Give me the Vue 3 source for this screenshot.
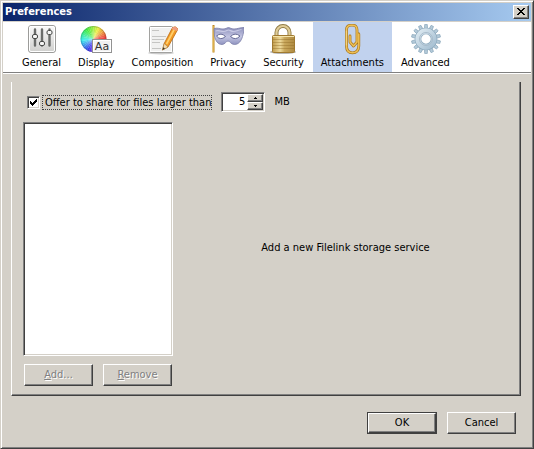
<script setup>
import { ref } from 'vue'

const tabs = ['General', 'Display', 'Composition', 'Privacy', 'Security', 'Attachments', 'Advanced']
const active = ref('Attachments')
const offerShare = ref(true)
const size = ref(5)

const wedges = Array.from({ length: 36 }, (_, i) => {
  const point = (deg) => {
    const a = ((deg - 90) * Math.PI) / 180
    return `${(13.5 + 13 * Math.cos(a)).toFixed(2)} ${(15 + 13 * Math.sin(a)).toFixed(2)}`
  }
  return {
    d: `M13.5 15L${point(i * 10)}A13 13 0 0 1 ${point(i * 10 + 11)}Z`,
    fill: `hsl(${(440 - i * 10) % 360} 82% 56%)`
  }
})
const teeth = Array.from({ length: 14 }, (_, i) => (i * 360) / 14)
</script>

<template>
  <main class="window">
    <header class="titlebar">
      <h1>Preferences</h1>
      <button class="close" type="button" aria-label="Close">
        <svg viewBox="0 0 8 7" shape-rendering="crispEdges">
          <path d="M0 0h2v1h1v1h2v-1h1v-1h2v1h-1v1h-1v1h-1v1h1v1h1v1h1v1h-2v-1h-1v-1h-2v1h-1v1h-2v-1h1v-1h1v-1h1v-1h-1v-1h-1v-1h-1z" />
        </svg>
      </button>
    </header>

    <nav class="toolbar">
      <button
        v-for="tab in tabs"
        :key="tab"
        type="button"
        class="tab"
        :class="{ selected: active === tab }"
        @click="active = tab"
      >
        <svg v-if="tab === 'General'" class="icon" viewBox="0 0 32 32">
          <defs>
            <linearGradient id="plate" x1="0" y1="0" x2="0" y2="1">
              <stop offset="0" stop-color="#fafafa" /><stop offset="1" stop-color="#cfcfcd" />
            </linearGradient>
          </defs>
          <rect x="2.5" y="1.5" width="27" height="27" rx="2.5" fill="url(#plate)" stroke="#9c9c9a" />
          <rect x="3.5" y="2.5" width="25" height="25" rx="1.5" fill="none" stroke="#fff" />
          <path d="M9 5.5v16M16 5.5v16M23.500 5.500v16" stroke="#6a6c6a" stroke-width="2.4" stroke-linecap="round" />
          <g fill="#f6f6f5" stroke="#484a48">
            <rect x="6.5" y="10.500" width="5" height="4" rx="1.5" />
            <rect x="13.5" y="17.500" width="5" height="4" rx="1.5" />
            <rect x="21" y="6.500" width="5" height="4" rx="1.5" />
          </g>
        </svg>

        <svg v-else-if="tab === 'Display'" class="icon" viewBox="0 0 32 32">
          <defs>
            <radialGradient id="glow">
              <stop offset="0" stop-color="#fff" stop-opacity=".3" />
              <stop offset=".7" stop-color="#fff" stop-opacity=".12" />
              <stop offset="1" stop-color="#fff" stop-opacity="0" />
            </radialGradient>
          </defs>
          <path v-for="w in wedges" :key="w.d" :d="w.d" :fill="w.fill" />
          <circle cx="13.5" cy="15" r="13" fill="url(#glow)" />
          <circle cx="13.5" cy="15" r="12.5" fill="none" stroke="#345" stroke-opacity=".25" />
          <rect x="12.5" y="15.5" width="19" height="13" fill="#f1f1f1" stroke="#929292" />
          <rect x="13.5" y="16.5" width="17" height="11" fill="none" stroke="#fff" />
          <text x="22" y="26" text-anchor="middle" class="glyphs">Aa</text>
        </svg>

        <svg v-else-if="tab === 'Composition'" class="icon" viewBox="0 0 32 32">
          <ellipse cx="15" cy="29" rx="13" ry="1.5" fill="#000" opacity=".2" />
          <rect x="3.5" y="2.5" width="23" height="26" rx="1" fill="#f1f1f0" stroke="#a2a2a0" />
          <rect x="4.5" y="3.5" width="21" height="24" fill="none" stroke="#fff" />
          <path d="M6 6.5h7M6 12.5h14M6 15.5h12M6 18.5h8M6 24.5h9" stroke="#c5c5c3" />
          <path d="M16.500 26l1.700-6.500L26.500 3.500q3-2 5.500 1.500L22 23z" fill="#f39a24" stroke="#b96b13" stroke-width=".8" />
          <path d="M20.500 20L28.500 5" stroke="#ffd06c" stroke-width="1.6" />
          <path d="M16.500 26l1.700-6.500 3.800 3.500z" fill="#f6deb1" stroke="#94733a" stroke-width=".5" />
          <path d="M16.500 26l.8-2.800 1.700 1.400z" fill="#333" />
          <path d="M26.500 3.500q3-2 5.500 1.500l-1 2-5.400-2z" fill="#ef9d82" />
        </svg>

        <svg v-else-if="tab === 'Privacy'" class="icon" viewBox="0 0 32 32">
          <defs>
            <linearGradient id="mask" x1="0" y1="0" x2="0" y2="1">
              <stop offset="0" stop-color="#8d90bb" /><stop offset=".55" stop-color="#c3c5e2" /><stop offset="1" stop-color="#8f93bf" />
            </linearGradient>
          </defs>
          <path d="M1.5 1v27.5" stroke="#bd8623" stroke-width="2" />
          <path d="M1.200 2v26" stroke="#f4cf6a" stroke-width=".8" />
          <path d="M2 4.500c4-1 6 .5 9 .5s4-1.500 5.500-1.500S19 5 22 5s6-1.500 10-1.500c0 3-.5 6-1.500 9-1.200 4.500-4 8-8 8-3.500 0-4.500-3.500-6.500-3.500s-3 3.500-6 3.500C6 20.500 3.500 17 2.500 12z" fill="url(#mask)" stroke="#7b7fa9" stroke-width=".8" />
          <path d="M3.500 7c4-1 5 .5 8 .5s3.500-1.500 5-1.500 2.500 1.500 5 1.500 5-1.500 8-2" fill="none" stroke="#c9cbe5" stroke-width="1.200" />
          <path d="M4.500 12q4.500-4 9 .5-5 4.500-9-.5zM18.500 12.500q4.500-4.500 9.500-.5-4.500 5-9.500.5z" fill="#fff" stroke="#666a96" />
        </svg>

        <svg v-else-if="tab === 'Security'" class="icon" viewBox="0 0 32 32">
          <defs>
            <linearGradient id="brass">
              <stop offset="0" stop-color="#c19c4c" /><stop offset=".35" stop-color="#ecd899" /><stop offset=".55" stop-color="#c9a85c" /><stop offset="1" stop-color="#ae8a42" />
            </linearGradient>
          </defs>
          <ellipse cx="16" cy="28" rx="13" ry="2" fill="#000" opacity=".28" />
          <path d="M9.5 13V8.500a6.500 6.500 0 0 1 13 0V13" fill="none" stroke="#8f7a45" stroke-width="4" />
          <path d="M9.500 13V8.500a6.500 6.500 0 0 1 13 0V13" fill="none" stroke="#e0cd98" stroke-width="2.200" />
          <rect x="5.5" y="11.5" width="22" height="17" rx="1" fill="url(#brass)" stroke="#a07a30" />
          <path d="M6 12.500h21" stroke="#f4e4aa" />
          <path d="M6 15.500h21M6 18.500h21M6 21.500h21M6 24.500h21" stroke="#8f6a24" opacity=".4" />
        </svg>

        <svg v-else-if="tab === 'Attachments'" class="icon" viewBox="0 0 32 32">
          <g fill="none" stroke-linecap="round" stroke-linejoin="round">
            <path d="M14 12v6l3.500 4 3.500-4V6q0-4.800-4.500-4.800h-1.500Q10.500 1.200 10.500 6v16q0 6.800 6 6.800T22.800 22V10" stroke="#a8761b" stroke-width="2.800" />
            <path d="M14 12v6l3.500 4 3.500-4V6q0-4.800-4.500-4.800h-1.500Q10.500 1.200 10.500 6v16q0 6.800 6 6.800T22.800 22V10" stroke="#eec057" stroke-width="1.500" />
            <path d="M10.300 7v14" stroke="#ffe7a0" stroke-width=".6" />
          </g>
        </svg>

        <svg v-else class="icon" viewBox="0 0 32 32">
          <defs>
            <linearGradient id="steel" x1="0" y1="0" x2="1" y2="1">
              <stop offset="0" stop-color="#dbe8f0" /><stop offset="1" stop-color="#a5bfd2" />
            </linearGradient>
          </defs>
          <path
            v-for="a in teeth"
            :key="a"
            d="M15.300 5.500l.4-5h2.600l.4 5z"
            :transform="`rotate(${a} 17 15)`"
            fill="#b4cad9"
            stroke="#8ba8bc"
            stroke-width=".7"
          />
          <circle cx="17" cy="15" r="8" fill="none" stroke="#8aa7bb" stroke-width="6.500" />
          <circle cx="17" cy="15" r="8" fill="none" stroke="url(#steel)" stroke-width="5.300" />
          <circle cx="17" cy="15" r="6.500" fill="none" stroke="#a9bccb" stroke-width="1" />
        </svg>
        <span>{{ tab }}</span>
      </button>
    </nav>

    <section class="body">
      <div class="panel">
        <div class="option">
          <span class="check">
            <input id="offer" v-model="offerShare" type="checkbox" />
            <svg v-if="offerShare" viewBox="0 0 7 7" shape-rendering="crispEdges">
              <path d="M0 2h1v1h1v1h1v-1h1v-1h1v-1h1v-1h1v3h-1v1h-1v1h-1v1h-1v1h-1v-1h-1v-1h-1z" />
            </svg>
          </span>
          <label class="focused" for="offer">Offer to share for files larger than</label>
          <span class="spinner">
            <input id="size" v-model="size" type="text" inputmode="numeric" />
            <span class="arrows">
              <button type="button" aria-label="Increase" @click="size++">
                <svg viewBox="0 0 3 2" shape-rendering="crispEdges"><path d="M1 0h1v1h1v1H0V1h1z" /></svg>
              </button>
              <button type="button" aria-label="Decrease" @click="size--">
                <svg viewBox="0 0 3 2" shape-rendering="crispEdges"><path d="M0 0h3v1H2v1H1V1H0z" /></svg>
              </button>
            </span>
          </span>
          <label for="size">MB</label>
        </div>
        <div class="content">
          <div class="services">
            <div class="list" role="listbox" aria-label="Filelink services"></div>
            <div class="actions">
              <button class="push" type="button" disabled><u>A</u>dd...</button>
              <button class="push" type="button" disabled><u>R</u>emove</button>
            </div>
          </div>
          <p class="hint">Add a new Filelink storage service</p>
        </div>
      </div>
      <footer class="footer">
        <span class="default"><button class="push" type="button">OK</button></span>
        <button class="push" type="button">Cancel</button>
      </footer>
    </section>
  </main>
</template>

<style>
body {
  margin: 0;
}
</style>

<style scoped>
.window {
  box-sizing: border-box;
  min-height: 100vh;
  display: flex;
  flex-direction: column;
  padding: 2px;
  border: 1px solid;
  border-color: #d4d0c8 #404040 #404040 #d4d0c8;
  box-shadow: inset 1px 1px #fff, inset -1px -1px #808080;
  background: #d4d0c8;
  color: #000;
  font: 11px/14px "DejaVu Sans Condensed", "DejaVu Sans", sans-serif;
}
button,
input {
  box-sizing: border-box;
  margin: 0;
  padding: 0;
  border: 0;
  border-radius: 0;
  color: inherit;
  font: inherit;
}
svg {
  display: block;
}
.titlebar {
  display: flex;
  align-items: center;
  justify-content: space-between;
  height: 18px;
  padding-right: 2px;
  background: linear-gradient(90deg, #0a246a, #a6caf0);
}
h1 {
  margin: 0;
  padding-left: 2px;
  color: #fff;
  font-size: 11px;
  line-height: 18px;
}
.close {
  display: grid;
  place-items: center;
  width: 16px;
  height: 14px;
  padding: 0 1px 1px 0;
}
.close svg {
  width: 8px;
  height: 7px;
}
.close,
.push,
.arrows button {
  background: #d4d0c8;
  border: 1px solid;
  border-color: #fff #404040 #404040 #fff;
  box-shadow: inset -1px -1px #808080;
}
.toolbar {
  display: flex;
  gap: 1px;
  margin-top: 1px;
  padding-left: 11px;
  background: #fff;
  border-bottom: 1px solid #808080;
  box-shadow: 0 1px #fff;
}
.tab {
  display: flex;
  flex-direction: column;
  align-items: center;
  height: 50px;
  padding: 2px 8px 0;
  background: none;
}
.tab.selected {
  background: #c1d2ee;
}
.icon {
  width: 32px;
  height: 32px;
}
.glyphs {
  font: 11px "DejaVu Sans", sans-serif;
  fill: #333;
}
.body {
  flex: 1;
  display: flex;
  flex-direction: column;
  padding: 9px 10px 12px 8px;
}
.panel {
  flex: 1;
  display: flex;
  flex-direction: column;
  gap: 10px;
  padding: 10px 10px 9px 11px;
  border: solid;
  border-width: 0 1px 1px;
  border-color: #404040 #404040 #404040 #fff;
  box-shadow: inset -1px -1px #808080;
}
.option {
  display: flex;
  align-items: center;
  height: 20px;
  padding-left: 4px;
}
.check {
  display: grid;
  place-items: center;
  margin-right: 2px;
}
.check input,
.check svg {
  grid-area: 1 / 1;
}
.check input {
  appearance: none;
  width: 13px;
  height: 13px;
}
.check svg {
  width: 7px;
  height: 7px;
  pointer-events: none;
}
.check input,
.spinner,
.list {
  background: #fff;
  border: 1px solid;
  border-color: #808080 #fff #fff #808080;
  box-shadow: inset 1px 1px #404040, inset -1px -1px #d4d0c8;
}
.focused {
  margin-right: 9px;
  padding: 0 0 0 2px;
  border: 1px dotted #404040;
  line-height: 13px;
}
.spinner {
  box-sizing: border-box;
  display: flex;
  width: 44px;
  height: 20px;
  margin-right: 9px;
  padding: 1px;
}
.spinner input {
  flex: 1;
  min-width: 0;
  padding-right: 2px;
  background: none;
  outline: 0;
  text-align: right;
}
.arrows {
  display: grid;
  grid-template-rows: 1fr 1fr;
  width: 16px;
}
.arrows button {
  display: grid;
  place-items: center;
}
.arrows svg {
  width: 3px;
  height: 2px;
}
.content {
  flex: 1;
  display: flex;
}
.services {
  display: flex;
  flex-direction: column;
  gap: 8px;
}
.list {
  flex: 1;
}
.actions {
  display: flex;
  gap: 10px;
  padding: 0 1px;
}
.push {
  width: 69px;
  height: 22px;
}
.push:disabled {
  color: #808080;
  text-shadow: 1px 1px #fff;
}
.hint {
  flex: 1;
  align-self: center;
  margin: 0;
  padding: 0 0 12px 8px;
  text-align: center;
}
.footer {
  display: flex;
  justify-content: flex-end;
  gap: 10px;
  padding: 16px 5px 0 0;
}
.default {
  display: flex;
  box-sizing: border-box;
  width: 70px;
  height: 22px;
  border: 1px solid #404040;
}
.default .push {
  width: 100%;
  height: 100%;
}
</style>
